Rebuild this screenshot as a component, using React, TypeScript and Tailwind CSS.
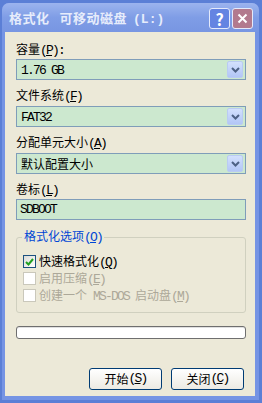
import React from "react";

function Mono({ children }: { children: React.ReactNode }) {
  return (
    <span className="font-['Liberation_Mono','Noto_Sans_CJK_SC',monospace] text-[13px] tracking-[-1.8px]">
      {children}
    </span>
  );
}

function Label({ text, k, colon }: { text: string; k: string; colon?: boolean }) {
  return (
    <div className="h-[14px] text-[12px] leading-[14px] text-black">
      {text}
      <Mono>
        (<u>{k}</u>){colon ? ":" : ""}
      </Mono>
    </div>
  );
}

function Combo({ children, className = "" }: { children: React.ReactNode; className?: string }) {
  return (
    <div className={`flex h-[21px] items-center border border-[#7f9db9] bg-[#cce8cf] p-[1px] ${className}`}>
      <div className="flex-1 pl-[3px] text-[12px] leading-[14px] text-black">{children}</div>
      <div className="mr-[1px] flex h-[17px] w-[16px] items-center justify-center rounded-[2px] border border-[#b9cbf3] bg-gradient-to-b from-[#d3e0fd] to-[#b2c6f6]">
        <svg width="9" height="6" viewBox="0 0 9 6">
          <path d="M1 1l3.5 3.5L8 1" stroke="#4d6185" strokeWidth="2" fill="none" />
        </svg>
      </div>
    </div>
  );
}

function Check({ checked, disabled, children }: { checked?: boolean; disabled?: boolean; children: React.ReactNode }) {
  return (
    <div className="flex h-[17px] items-center gap-[3px]">
      <div
        className={`flex h-[13px] w-[13px] items-center justify-center border ${
          disabled ? "border-[#cac8bb] bg-white" : "border-[#1c5180] bg-gradient-to-br from-[#dcdcd7] to-white"
        }`}
      >
        {checked && (
          <svg width="9" height="8" viewBox="0 0 9 8">
            <path d="M1 4l2.5 2.5L8 1" stroke="#21a121" strokeWidth="2" fill="none" />
          </svg>
        )}
      </div>
      <div className={`text-[12px] leading-[14px] ${disabled ? "text-[#aca899]" : "text-black"}`}>{children}</div>
    </div>
  );
}

function Btn({ text, k }: { text: string; k: string }) {
  return (
    <button className="flex h-[22px] w-[73px] items-center justify-center rounded-[3px] border border-[#003c74] bg-gradient-to-b from-white to-[#eceae3] text-[12px] leading-[14px] text-black">
      {text}
      <Mono>
        (<u>{k}</u>)
      </Mono>
    </button>
  );
}

export default function App() {
  return (
    <div className="h-[403px] w-[262px] overflow-hidden bg-[#5b7fd6] pt-[3px] font-['Noto_Sans_CJK_SC',sans-serif]">
      <div className="ml-[2px] flex h-[397px] w-[257px] flex-col overflow-hidden rounded-t-[7px] bg-[#7594e4]">
        {/* title bar */}
        <div className="flex h-[29px] items-center bg-gradient-to-b from-[#9cb4ee] via-[#7f9de6] to-[#7896e2] pl-[7px] pr-[6px] pt-[2px]">
          <div className="flex-1 text-[13px] font-bold leading-[16px] tracking-[0.5px] text-[#e6ecfb]">
            格式化<span className="ml-[10px]">可移动磁盘</span>
            <span className="ml-[6px] font-['Liberation_Mono',monospace] tracking-normal">(L:)</span>
          </div>
          <div className="flex gap-[2px]">
            <div className="flex h-[21px] w-[21px] items-center justify-center rounded-[3px] border border-[#e4eafb] bg-[#6484e2] text-[16px] font-bold leading-none text-white">
              ?
            </div>
            <div className="flex h-[21px] w-[21px] items-center justify-center rounded-[3px] border border-[#e4eafb] bg-[#b27a8e]">
              <svg width="11" height="11" viewBox="0 0 11 11">
                <path d="M1.5 1.5l8 8M9.5 1.5l-8 8" stroke="white" strokeWidth="2" />
              </svg>
            </div>
          </div>
        </div>

        {/* body */}
        <div className="mb-[4px] ml-[3px] mr-[4px] flex flex-1 flex-col bg-[#ece9d8] pl-[11px] pr-[9px] pt-[10px]">
          <Label text="容量" k="P" colon />
          <Combo className="mt-[3px]">
            <Mono>1.76 GB</Mono>
          </Combo>

          <div className="mt-[8px]">
            <Label text="文件系统" k="F" />
          </div>
          <Combo className="mt-[4px]">
            <Mono>FAT32</Mono>
          </Combo>

          <div className="mt-[8px]">
            <Label text="分配单元大小" k="A" />
          </div>
          <Combo className="mt-[4px]">默认配置大小</Combo>

          <div className="mt-[8px]">
            <Label text="卷标" k="L" />
          </div>
          <div className="mt-[3px] flex h-[21px] items-center border border-[#7f9db9] bg-[#cce8cf] pl-[3px] text-[12px] leading-[14px] text-black">
            <Mono>SDBOOT</Mono>
          </div>

          {/* options group */}
          <div className="relative mt-[17px] h-[76px] rounded-[3px] border border-[#d0d0bf] pl-[6px] pt-[15px]">
            <div className="absolute left-[5px] top-[-9px] bg-[#ece9d8] px-[2px] text-[12px] leading-[14px] text-[#0046d5]">
              格式化选项
              <Mono>
                (<u>O</u>)
              </Mono>
            </div>
            <Check checked>
              快速格式化
              <Mono>
                (<u>Q</u>)
              </Mono>
            </Check>
            <Check disabled>
              启用压缩
              <Mono>
                (<u>E</u>)
              </Mono>
            </Check>
            <Check disabled>
              创建一个<Mono> MS-DOS </Mono>启动盘
              <Mono>
                (<u>M</u>)
              </Mono>
            </Check>
          </div>

          {/* progress */}
          <div className="mt-[13px] h-[13px] rounded-[3px] border border-[#6f6f6f] bg-white shadow-[inset_0_1px_0_#e0e0e0]" />

          {/* buttons */}
          <div className="mt-[29px] flex justify-end gap-[9px] pr-[2px]">
            <Btn text="开始" k="S" />
            <Btn text="关闭" k="C" />
          </div>
        </div>
      </div>
    </div>
  );
}
